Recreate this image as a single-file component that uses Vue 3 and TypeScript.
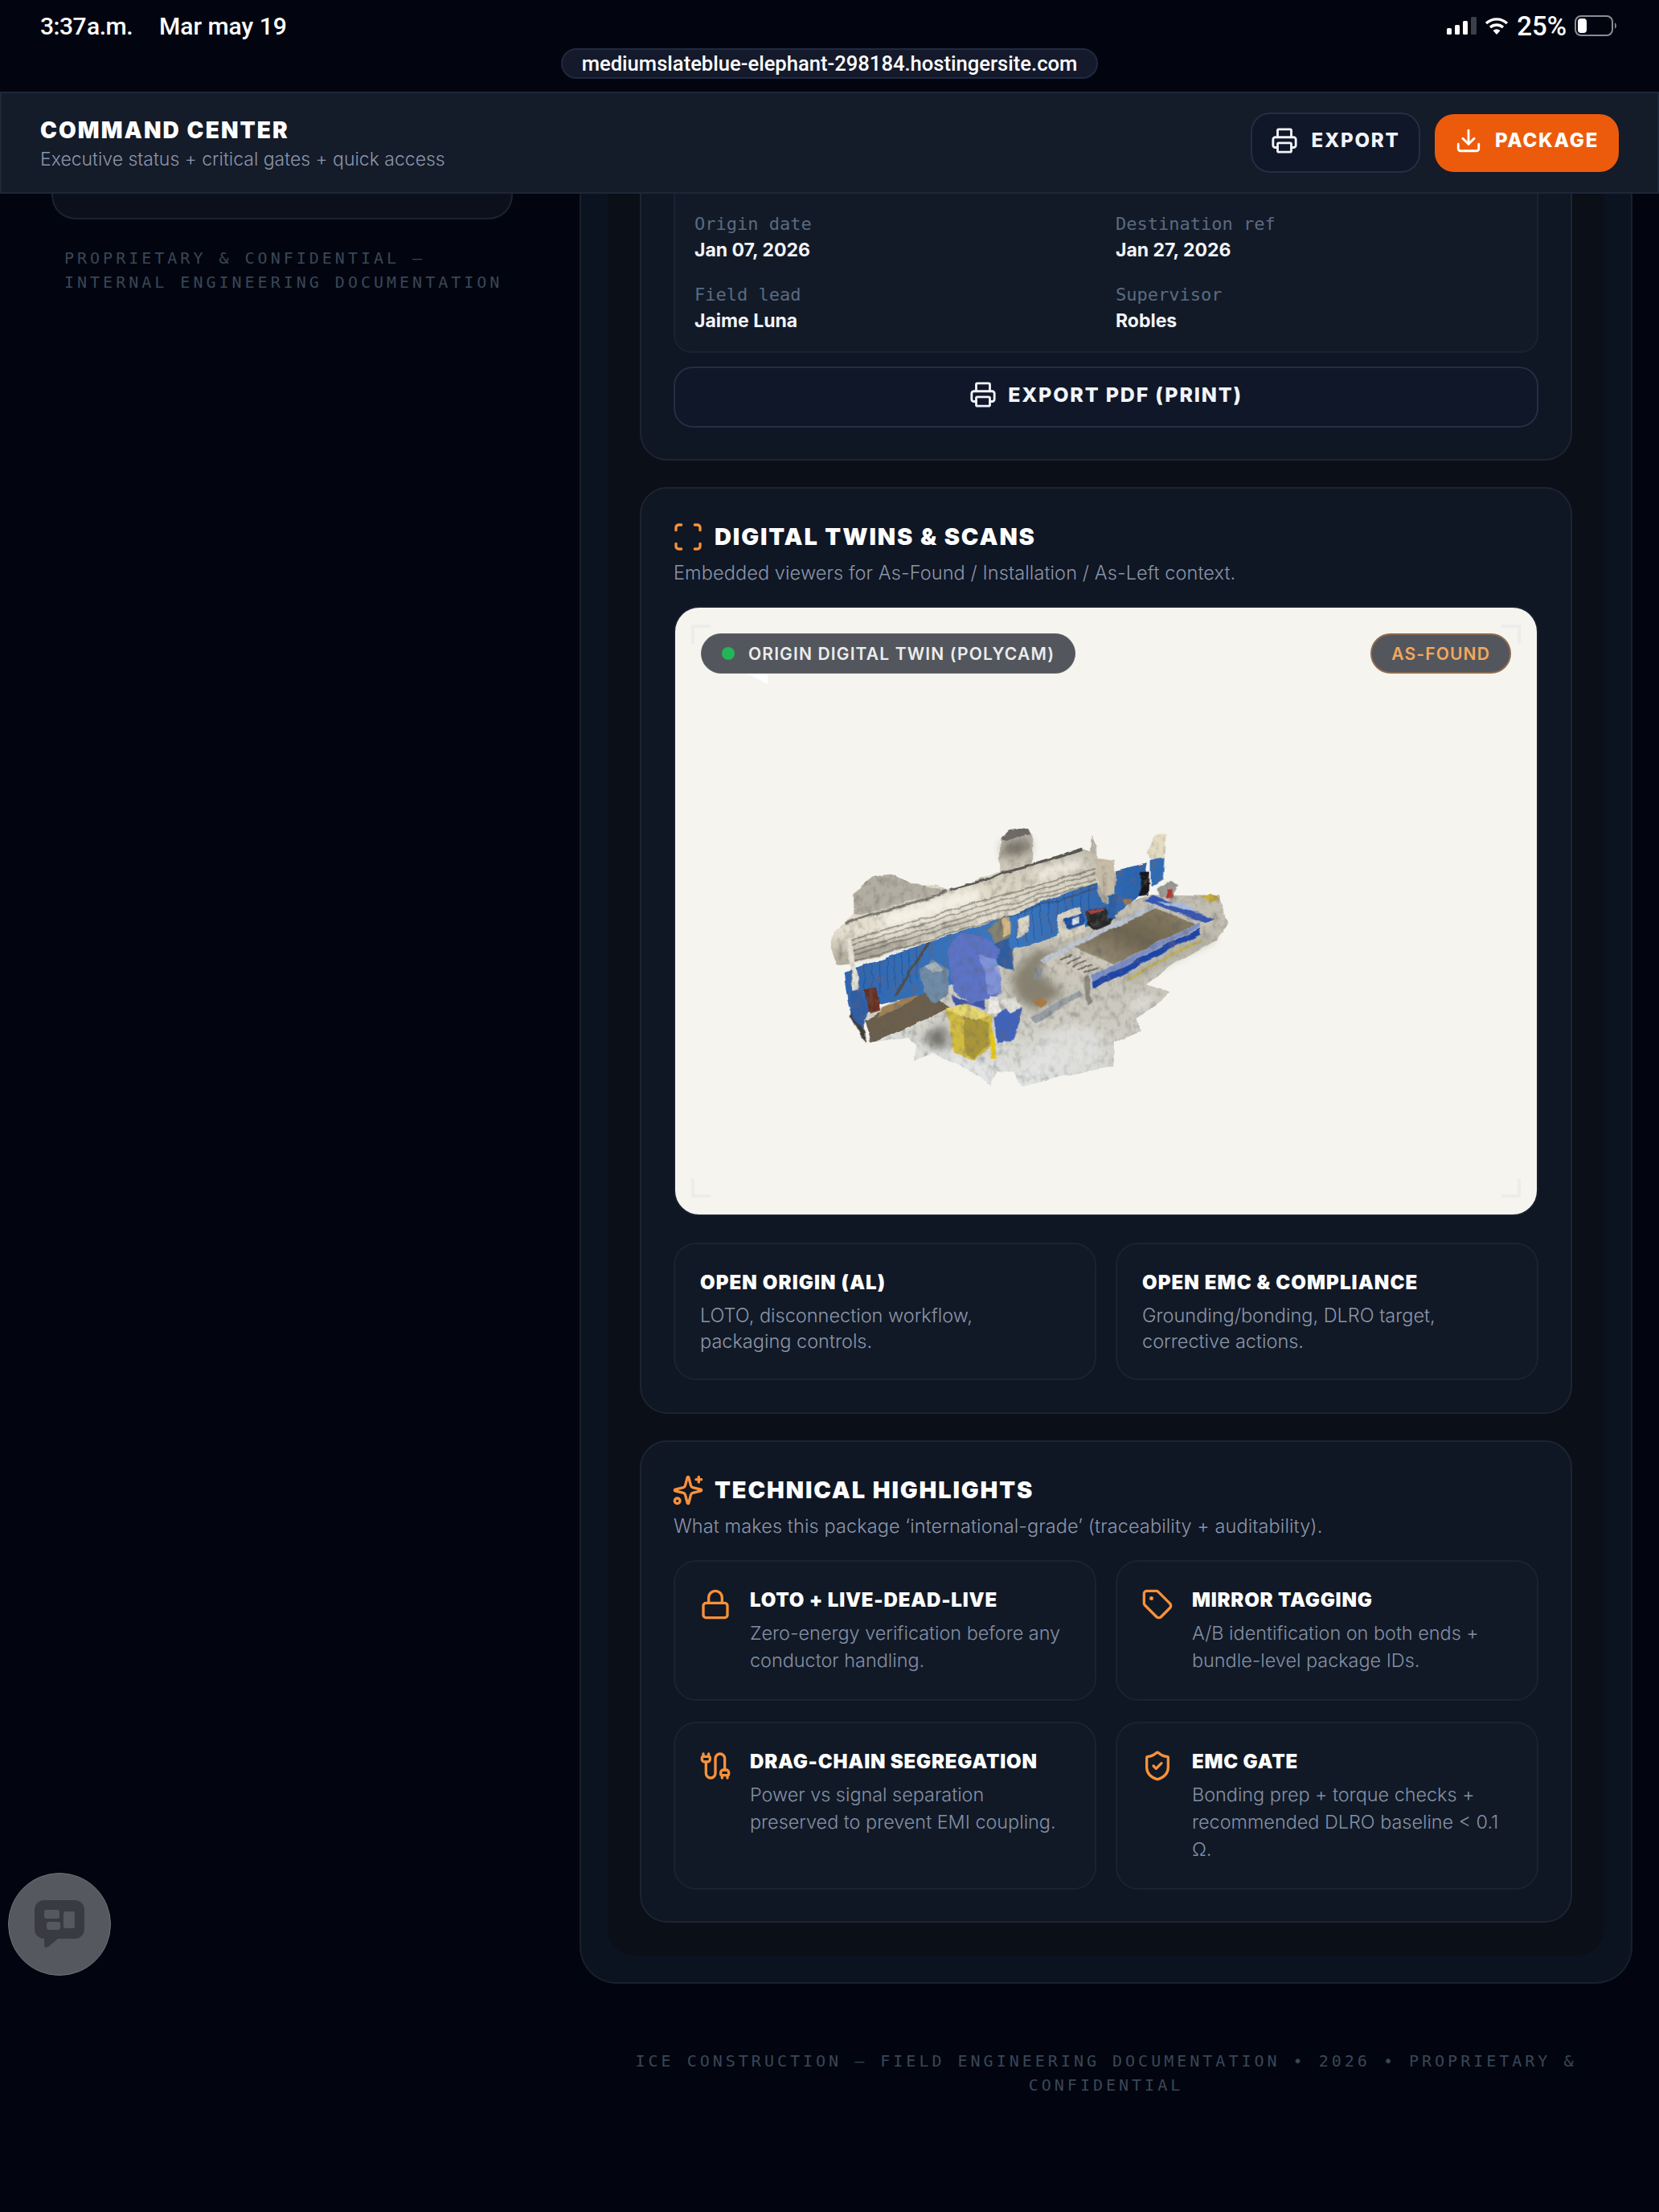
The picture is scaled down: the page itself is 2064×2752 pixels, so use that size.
<script setup lang="ts">
interface Field { label: string; value: string }
interface LinkCard { title: string; lines: string[] }
interface Highlight { icon: string; title: string; desc: string }

const fields: Field[] = [
  { label: 'Origin date', value: 'Jan 07, 2026' },
  { label: 'Destination ref', value: 'Jan 27, 2026' },
  { label: 'Field lead', value: 'Jaime Luna' },
  { label: 'Supervisor', value: 'Robles' },
];

const linkCards: LinkCard[] = [
  { title: 'OPEN ORIGIN (AL)', lines: ['LOTO, disconnection workflow,', 'packaging controls.'] },
  { title: 'OPEN EMC & COMPLIANCE', lines: ['Grounding/bonding, DLRO target,', 'corrective actions.'] },
];

const highlights: Highlight[] = [
  { icon: 'lock', title: 'LOTO + LIVE-DEAD-LIVE', desc: 'Zero-energy verification before any conductor handling.' },
  { icon: 'tag', title: 'MIRROR TAGGING', desc: 'A/B identification on both ends + bundle-level package IDs.' },
  { icon: 'cable', title: 'DRAG-CHAIN SEGREGATION', desc: 'Power vs signal separation preserved to prevent EMI coupling.' },
  { icon: 'shield', title: 'EMC GATE', desc: 'Bonding prep + torque checks + recommended DLRO baseline < 0.1 Ω.' },
];

// lineas de cables sobre la pared
const wires: number[] = [0, 20, 44, 62, 88];

// juntas verticales de la pared azul
const seams: string[] = [];
for (let x = 225; x < 440; x += 24) {
  const top = 688 - 0.42 * (x - 182);
  seams.push(`M${x} ${top} L${x + 6} ${top + 125}`);
}
for (let x = 745; x < 1000; x += 26) {
  const top = 510 - 0.44 * (x - 640);
  seams.push(`M${x} ${top} L${x + 4} ${top + 125}`);
}
</script>

<template>
  <div class="page">
    <!-- status bar + url -->
    <div class="topbar">
      <div class="status">
        <div class="status-left"><span class="clock">3:37 a.m.</span><span>Mar may 19</span></div>
        <div class="status-right">
          <svg width="38" height="22" viewBox="0 0 38 22">
            <rect x="0" y="14" width="6" height="8" rx="1.5" fill="#fff" />
            <rect x="10" y="10" width="6" height="12" rx="1.5" fill="#fff" />
            <rect x="20" y="5" width="6" height="17" rx="1.5" fill="#fff" />
            <rect x="30" y="0" width="7" height="22" rx="1.5" fill="#3a3f4a" />
          </svg>
          <svg width="30" height="24" viewBox="0 0 30 24" fill="none" stroke="#fff" stroke-width="3.4">
            <path d="M2 9 a19 19 0 0 1 26 0" />
            <path d="M7 14 a12 12 0 0 1 16 0" />
            <path d="M15 23 L10.5 18 a6.5 6.5 0 0 1 9 0 Z" fill="#fff" stroke="none" />
          </svg>
          <span class="pct">25%</span>
          <svg width="54" height="26" viewBox="0 0 54 26" fill="none">
            <rect x="1" y="1" width="46" height="24" rx="7" stroke="#8a8d94" stroke-width="2" />
            <rect x="4" y="4" width="11" height="18" rx="4" fill="#fff" />
            <path d="M50 9 a5 5 0 0 1 0 8 Z" fill="#8a8d94" />
          </svg>
        </div>
      </div>
      <div class="url-row"><div class="url">mediumslateblue-elephant-298184.hostingersite.com</div></div>
    </div>

    <header class="head">
      <div class="head-text">
        <h1>COMMAND CENTER</h1>
        <p>Executive status + critical gates + quick access</p>
      </div>
      <div class="head-actions">
        <button class="btn btn-ghost">
          <svg class="ic-btn" viewBox="0 0 24 24"><path d="M6 18H4a2 2 0 0 1-2-2v-5a2 2 0 0 1 2-2h16a2 2 0 0 1 2 2v5a2 2 0 0 1-2 2h-2" /><path d="M6 9V3a1 1 0 0 1 1-1h10a1 1 0 0 1 1 1v6" /><rect x="6" y="14" width="12" height="8" rx="1" /></svg>
          EXPORT
        </button>
        <button class="btn btn-orange">
          <svg class="ic-btn" viewBox="0 0 24 24"><path d="M21 15v4a2 2 0 0 1-2 2H5a2 2 0 0 1-2-2v-4" /><polyline points="7 10 12 15 17 10" /><line x1="12" y1="15" x2="12" y2="3" /></svg>
          PACKAGE
        </button>
      </div>
    </header>

    <main class="layout">
      <aside class="side">
        <div class="side-card"></div>
        <p class="side-note">PROPRIETARY &amp; CONFIDENTIAL —<br />INTERNAL ENGINEERING DOCUMENTATION</p>
      </aside>

      <div class="col">
        <section class="panel">
          <div class="panel-inner">
            <!-- tarjeta de datos -->
            <div class="card card-cut">
              <div class="data-box">
                <div v-for="f in fields" :key="f.label" class="field">
                  <span class="field-label">{{ f.label }}</span>
                  <span class="field-value">{{ f.value }}</span>
                </div>
              </div>
              <button class="btn-wide">
                <svg class="ic-btn" viewBox="0 0 24 24"><path d="M6 18H4a2 2 0 0 1-2-2v-5a2 2 0 0 1 2-2h16a2 2 0 0 1 2 2v5a2 2 0 0 1-2 2h-2" /><path d="M6 9V3a1 1 0 0 1 1-1h10a1 1 0 0 1 1 1v6" /><rect x="6" y="14" width="12" height="8" rx="1" /></svg>
                EXPORT PDF (PRINT)
              </button>
            </div>

            <!-- digital twins -->
            <div class="card">
              <div class="card-title">
                <svg class="ic-title" viewBox="0 0 24 24"><path d="M3 7V5a2 2 0 0 1 2-2h2" /><path d="M17 3h2a2 2 0 0 1 2 2v2" /><path d="M21 17v2a2 2 0 0 1-2 2h-2" /><path d="M7 21H5a2 2 0 0 1-2-2v-2" /></svg>
                <h2>DIGITAL TWINS &amp; SCANS</h2>
              </div>
              <p class="card-sub">Embedded viewers for As-Found / Installation / As-Left context.</p>

              <div class="viewer">
                <i class="mark tl"></i><i class="mark tr"></i><i class="mark bl"></i><i class="mark br"></i>
                <div class="tag-row">
                  <span class="pill"><i class="dot"></i>ORIGIN DIGITAL TWIN (POLYCAM)</span>
                  <span class="pill pill-found">AS-FOUND</span>
                </div>
                <i class="notch"></i>

                <!-- modelo 3D aproximado -->
                <svg class="scan" viewBox="0 0 1568 1260" preserveAspectRatio="none">
                  <defs>
                    <filter id="soft" x="-5%" y="-5%" width="110%" height="110%">
                      <feTurbulence type="fractalNoise" baseFrequency="0.014 0.018" numOctaves="3" seed="7" result="n" />
                      <feDisplacementMap in="SourceGraphic" in2="n" scale="18" xChannelSelector="R" yChannelSelector="G" />
                      <feGaussianBlur stdDeviation="2" result="b" />
                      <feTurbulence type="fractalNoise" baseFrequency="0.05 0.03" numOctaves="4" seed="3" result="t" />
                      <feColorMatrix in="t" type="matrix" values="0 0 0 0 .12  0 0 0 0 .12  0 0 0 0 .12  .8 .8 0 0 -.74" result="spot" />
                      <feComposite in="spot" in2="b" operator="in" result="tex" />
                      <feMerge><feMergeNode in="b" /><feMergeNode in="tex" /></feMerge>
                    </filter>
                    <filter id="wash" x="-20%" y="-20%" width="140%" height="140%">
                      <feGaussianBlur stdDeviation="16" />
                    </filter>
                    <linearGradient id="wall" x1="0.55" y1="0" x2="0.45" y2="1">
                      <stop offset="0" stop-color="#b5afa2" />
                      <stop offset="0.42" stop-color="#dcd6c5" />
                      <stop offset="0.8" stop-color="#e6e1d2" />
                      <stop offset="1" stop-color="#b8b2a2" />
                    </linearGradient>
                    <linearGradient id="floor" x1="0.6" y1="0.2" x2="0.35" y2="1">
                      <stop offset="0" stop-color="#c2beb2" />
                      <stop offset="0.55" stop-color="#cfcdc3" />
                      <stop offset="1" stop-color="#e3e6e6" />
                    </linearGradient>
                    <linearGradient id="bed" x1="0" y1="1" x2="1" y2="0">
                      <stop offset="0" stop-color="#a59a82" />
                      <stop offset="0.5" stop-color="#6f6550" />
                      <stop offset="1" stop-color="#8f8468" />
                    </linearGradient>
                    <linearGradient id="bluewall" x1="0" y1="0" x2="1" y2="0">
                      <stop offset="0" stop-color="#2d66b0" />
                      <stop offset="0.5" stop-color="#3a79c4" />
                      <stop offset="1" stop-color="#2a63ad" />
                    </linearGradient>
                  </defs>

                  <!-- piso -->
                  <g filter="url(#soft)">
                    <path fill="url(#floor)" d="M250 850 L780 560 L1180 400 L1400 405 L1435 510 L1390 570 L1250 660 L1165 735 L1245 765 L1180 830 L1130 860 L1150 905 L1060 950 L1060 1040 L900 1075 L820 1100 L760 1115 L735 1060 L680 1060 L660 1110 L600 1060 L470 990 L410 1020 L420 960 L395 930 L270 955 Z" />
                  </g>
                  <g filter="url(#wash)">
                    <path fill="#e8eaea" opacity=".55" d="M760 1040 L840 920 L930 880 L1020 910 L1020 1020 L880 1050 L790 1085 Z" />
                    <path fill="#eef0ef" opacity=".6" d="M1120 780 L1210 780 L1150 825 L1110 840Z" />
                    <path fill="#eef0f1" opacity=".7" d="M500 1000 L560 1000 L650 1050 L650 1085 L590 1040Z" />
                    <path fill="#6f6e68" d="M440 930 L510 880 L520 975 L475 970Z" />
                    <path fill="#85806f" d="M730 700 L800 610 L900 610 L810 680 L900 770 L800 830 L740 780Z" />
                    <path fill="#a8a698" d="M1100 700 L1300 590 L1380 540 L1380 570 L1200 670 L1110 730Z" />
                  </g>
                  <g filter="url(#soft)">
                    <path fill="#c9b23a" d="M1345 410 L1375 395 L1405 420 L1370 428Z" />
                    <!-- suelo cafe izquierda -->
                    <path fill="#6c5f4c" d="M250 870 L440 755 L530 820 L270 955 Z" />
                    <path fill="#9f8257" d="M310 820 L440 760 L400 800 L290 860Z" />
                    <!-- pared azul -->
                    <path fill="url(#bluewall)" d="M182 690 L440 580 L640 510 L1000 350 L1060 450 L1068 310 L1170 280 L1150 400 L1050 490 L780 590 L735 600 L700 660 L440 770 L300 810 L250 850 L215 880 L195 800Z" />
                    <g stroke="#1d4c90" stroke-width="3" opacity=".6">
                      <path v-for="s in seams" :key="s" :d="s" />
                    </g>
                    <path fill="#4f4d49" d="M465 555 L345 775 L352 780 L472 560Z" />
                    <!-- pared blanca superior -->
                    <path fill="url(#wall)" d="M135 580 L160 525 L215 470 L215 395 L280 330 L330 320 L400 355 L480 365 L530 380 L690 310 L690 190 L720 160 L780 150 L795 180 L795 280 L960 225 L985 235 L990 180 L1010 240 L1005 350 L640 510 L440 580 L210 655 L160 660Z" />
                    <path fill="#b3aea2" d="M215 470 L215 395 L280 330 L330 320 L400 355 L520 385 L380 430 L240 475Z" />
                  </g>
                  <g filter="url(#wash)" opacity=".8">
                    <path fill="#fbf8ee" d="M300 470 L620 370 L640 420 L320 530Z" />
                    <path fill="#fbf8ee" d="M800 310 L960 260 L960 300 L810 350Z" />
                    <path fill="#77736a" d="M215 620 L600 490 L600 500 L220 640Z" />
                    <path fill="#625f58" d="M700 210 L780 190 L785 240 L705 260Z" />
                  </g>
                  <g filter="url(#soft)">
                    <path fill="none" stroke="#2b2a28" stroke-width="9" opacity=".7" d="M530 380 L640 345 L700 315 L800 285 L960 228" />
                    <path fill="none" stroke="#2f2e2b" stroke-width="8" opacity=".6" d="M185 505 L280 470 L400 432 L520 385" />
                    <path fill="#6e6b66" d="M692 190 L720 160 L780 150 L790 175 L760 180 L700 200Z" />
                    <g fill="none" stroke="#3a3834" stroke-width="3.5" opacity=".55">
                      <path v-for="w in wires" :key="w" :d="`M210 ${570 + w * 0.9} L620 ${425 + w} L1000 ${305 + w * 0.8}`" />
                    </g>
                    <!-- ducto derecho -->
                    <path fill="#2f6cb6" d="M1180 270 L1225 255 L1220 340 L1180 370Z" />
                    <path fill="#e4dcc2" d="M1170 240 L1200 175 L1232 170 L1226 260 L1180 265Z" />
                    <path fill="#17181c" d="M1148 312 L1175 310 L1172 400 L1145 405Z" />
                    <path fill="#9b9a95" d="M1200 375 L1240 345 L1270 360 L1250 405 L1215 410Z" />
                    <path fill="#b5342e" d="M1232 378 L1250 375 L1250 408 L1233 410Z" />
                    <!-- panel y caja negra -->
                    <path fill="#d8d3c2" d="M880 470 L950 445 L968 530 L892 575 L872 560Z" />
                    <path fill="#1f4fa0" d="M898 495 L960 468 L962 510 L905 532Z" />
                    <path fill="#d9e3ef" d="M925 490 L945 480 L945 505 L925 515Z" />
                    <path fill="#272626" d="M968 462 L1030 445 L1065 480 L1050 512 L1000 532 L972 510Z" />
                    <path fill="#b5423a" d="M975 462 L1025 448 L1030 455 L985 470Z" />
                    <path fill="#bdb29a" d="M1005 260 L1060 270 L1068 340 L1060 440 L1020 430 L1005 380Z" opacity=".85" />
                    <path fill="#2a5ea6" d="M1040 400 L1068 395 L1066 490 L1045 490Z" />
                    <path fill="#a77c4d" d="M1090 420 L1120 415 L1120 435 L1095 440Z" />
                    <!-- mesa -->
                    <path fill="url(#bed)" d="M930 595 L1190 450 L1325 510 L1060 660 Z" />
                    <path fill="#cdc8bb" d="M830 650 L930 598 L1040 655 L940 732Z" />
                    <g stroke="#4f4d49" stroke-width="6" opacity=".75">
                      <path d="M885 640 L925 620" /><path d="M905 655 L950 630" /><path d="M925 670 L970 645" /><path d="M945 685 L990 660" />
                      <path d="M965 695 L1010 672" />
                    </g>
                    <path fill="#bcc4d2" d="M820 640 L1190 430 L1200 442 L832 652Z" />
                    <path fill="#3457b4" d="M1160 420 L1190 400 L1390 490 L1365 510Z" />
                    <path fill="#a8bcdd" d="M1200 425 L1290 430 L1340 470 L1260 445Z" />
                    <path fill="#c7c2b2" d="M1335 515 L1390 490 L1380 520 L1345 538Z" />
                    <path fill="#7d8fc8" d="M985 705 L1335 505 L1340 520 L990 725Z" />
                    <path fill="#1f45a8" d="M990 725 L1340 525 L1342 548 L992 750Z" />
                    <path fill="#c9b43f" d="M1095 716 L1340 565 L1345 570 L1100 720Z" />
                    <path fill="#9aa0a6" d="M790 855 L950 755 L965 770 L805 880Z" />
                    <path fill="#8d8a80" d="M965 710 L980 700 L985 800 L970 815Z" />
                    <path fill="#8c8f96" d="M800 670 L825 665 L830 710 L805 715Z" />
                    <path fill="#a97c45" d="M798 795 L825 780 L842 805 L820 822Z" />
                    <!-- tanque gris y barril -->
                    <path fill="#6f8ba6" d="M430 680 L470 640 L525 680 L522 770 L480 805 L440 765Z" />
                    <path fill="#a9b3bb" d="M445 665 L475 650 L510 680 L470 690Z" />
                    <path fill="#6a2d1e" d="M252 752 L290 742 L303 830 L268 842Z" />
                    <path fill="#e6e2d6" d="M195 590 L205 555 L235 750 L212 755 L205 690Z" />
                    <path fill="#85826f" d="M650 530 L700 480 L725 510 L720 570 L680 590Z" />
                    <path fill="#d3b888" d="M695 490 L720 478 L722 545 L700 560Z" />
                    <path fill="#2d5da0" d="M660 590 L720 560 L735 680 L690 670Z" />
                    <path fill="#ddd8c8" d="M745 490 L785 475 L785 540 L750 560Z" />
                    <!-- maquina azul -->
                    <path fill="#5b73c6" d="M517 600 L560 545 L640 558 L695 600 L680 640 L650 652 L695 712 L690 768 L640 790 L600 812 L540 760Z" />
                    <path fill="#8a9bdd" d="M620 620 L680 640 L695 712 L690 768 L650 770 L640 690Z" opacity=".8" />
                    <path fill="#3d56a8" d="M535 770 L600 810 L640 790 L640 830 L590 810 L545 810Z" />
                    <path fill="#efeee8" d="M655 775 L685 780 L695 840 L650 845Z" />
                    <!-- base azul -->
                    <path fill="#3f63bb" d="M670 860 L735 800 L765 825 L735 940 L680 955Z" />
                    <path fill="#e0dfd8" d="M690 790 L740 780 L765 820 L720 840Z" />
                    <!-- gabinete amarillo -->
                    <path fill="#d2bc41" d="M515 825 L570 808 L665 852 L660 960 L610 1022 L540 985 Z" />
                    <path fill="#a99637" d="M570 850 L655 880 L650 960 L608 1015 L575 990Z" />
                    <path fill="#e8d96f" d="M515 825 L570 808 L665 852 L612 870Z" />
                    <path fill="#e5c80e" d="M654 905 L668 905 L675 1010 L660 1012Z" />
                    <!-- sombras -->
                    <path fill="#3e3a33" d="M200 850 L215 825 L262 955 L240 930Z" />
                    <path fill="#2d5da5" d="M205 760 L240 755 L262 830 L240 900 L210 860Z" />
                  </g>
                </svg>
              </div>

              <div class="two-col link-row">
                <div v-for="c in linkCards" :key="c.title" class="tile link">
                  <h3>{{ c.title }}</h3>
                  <p v-for="l in c.lines" :key="l">{{ l }}</p>
                </div>
              </div>
            </div>

            <!-- highlights -->
            <div class="card card-last">
              <div class="card-title">
                <svg class="ic-title" viewBox="0 0 24 24"><path d="M9.937 15.5A2 2 0 0 0 8.5 14.063l-6.135-1.582a.5.5 0 0 1 0-.962L8.5 9.936A2 2 0 0 0 9.937 8.5l1.582-6.135a.5.5 0 0 1 .963 0L14.063 8.5A2 2 0 0 0 15.5 9.937l6.135 1.581a.5.5 0 0 1 0 .964L15.5 14.063a2 2 0 0 0-1.437 1.437l-1.582 6.135a.5.5 0 0 1-.963 0z" /><path d="M20 2v4" /><path d="M22 4h-4" /><circle cx="4" cy="20" r="2" /></svg>
                <h2>TECHNICAL HIGHLIGHTS</h2>
              </div>
              <p class="card-sub">What makes this package ‘international-grade’ (traceability + auditability).</p>

              <div class="two-col high-grid">
                <div v-for="h in highlights" :key="h.title" class="tile high">
                  <svg class="ic-high" viewBox="0 0 24 24">
                    <template v-if="h.icon === 'lock'">
                      <rect x="3" y="11" width="18" height="11" rx="2" ry="2" /><path d="M7 11V7a5 5 0 0 1 10 0v4" />
                    </template>
                    <template v-else-if="h.icon === 'tag'">
                      <path d="M12.586 2.586A2 2 0 0 0 11.172 2H4a2 2 0 0 0-2 2v7.172a2 2 0 0 0 .586 1.414l8.704 8.704a2.426 2.426 0 0 0 3.42 0l6.58-6.58a2.426 2.426 0 0 0 0-3.42z" /><circle cx="7.5" cy="7.5" r=".5" fill="currentColor" />
                    </template>
                    <template v-else-if="h.icon === 'cable'">
                      <path d="M17 21v-2a1 1 0 0 1-1-1v-1a2 2 0 0 1 2-2h2a2 2 0 0 1 2 2v1a1 1 0 0 1-1 1" /><path d="M19 15V6.5a1 1 0 0 0-7 0v11a1 1 0 0 1-7 0V9" /><path d="M21 21v-2h-4" /><path d="M3 5h4V3" /><path d="M7 5a1 1 0 0 1 1 1v1a2 2 0 0 1-2 2H4a2 2 0 0 1-2-2V6a1 1 0 0 1 1-1V3" />
                    </template>
                    <template v-else>
                      <path d="M20 13c0 5-3.5 7.5-7.66 8.95a1 1 0 0 1-.67-.01C7.5 20.5 4 18 4 13V6a1 1 0 0 1 1-1c2 0 4.5-1.2 6.24-2.72a1.17 1.17 0 0 1 1.52 0C14.51 3.81 17 5 19 5a1 1 0 0 1 1 1z" /><path d="m9 12 2 2 4-4" />
                    </template>
                  </svg>
                  <div>
                    <h3>{{ h.title }}</h3>
                    <p>{{ h.desc }}</p>
                  </div>
                </div>
              </div>
            </div>
          </div>
        </section>

        <footer class="foot">ICE CONSTRUCTION — FIELD ENGINEERING DOCUMENTATION • 2026 • PROPRIETARY &amp; CONFIDENTIAL</footer>
      </div>
    </main>

    <!-- boton flotante de chat -->
    <div class="chat">
      <svg width="66" height="60" viewBox="0 0 66 60">
        <path fill="#3a3b40" d="M14 1h38a12 12 0 0 1 12 12v24a12 12 0 0 1-12 12H31L19 59c-2 1.500-5 1-5-2v-8A12 12 0 0 1 2 37V13A12 12 0 0 1 14 1z" />
        <rect x="14" y="13" width="19" height="11" rx="3" fill="#55585f" />
        <rect x="17" y="28" width="17" height="10" rx="3" fill="#55585f" />
        <rect x="38" y="15" width="14" height="21" rx="2.500" fill="#55585f" />
      </svg>
    </div>
  </div>
</template>

<style scoped>
.page {
  position: relative;
  min-height: 2752px;
  background: #02050f;
  font-family: Inter, "Liberation Sans", sans-serif;
  color: #fff;
  overflow: hidden;
}
h1, h2, h3, p { margin: 0; }

/* top */
.topbar { height: 114px; box-sizing: border-box; }
.status {
  height: 60px;
  display: flex;
  align-items: center;
  justify-content: space-between;
  padding: 4px 50px 0;
  box-sizing: border-box;
  font-family: Roboto, Inter, sans-serif;
  font-size: 30px;
  font-weight: 500;
}
.status-left { display: flex; gap: 33px; }
.clock { word-spacing: -6px; letter-spacing: -.5px; }
.status-right { display: flex; align-items: center; gap: 9px; margin-right: 1px; }
.pct { margin: 0 1px; font-size: 33px; }
.url-row { display: flex; justify-content: center; }
.url {
  height: 38px;
  width: 668px;
  box-sizing: border-box;
  border: 2px solid #1f2940;
  border-radius: 19px;
  background: #141a2b;
  font-family: Roboto, Inter, sans-serif;
  font-size: 25.6px;
  font-weight: 500;
  line-height: 34px;
  text-align: center;
  white-space: nowrap;
}

/* header */
.head {
  height: 127px;
  box-sizing: border-box;
  position: relative;
  z-index: 2;
  display: flex;
  align-items: center;
  justify-content: space-between;
  padding: 0 48px;
  background: #141b29;
  border: 2px solid #1d2738;
}
.head-text { padding-top: 3px; }
.head h1 {
  font-size: 28px;
  line-height: 34px;
  font-weight: 900;
  letter-spacing: 2.1px;
}
.head p {
  margin-top: 4px;
  font-size: 23px;
  line-height: 30px;
  font-weight: 300;
  color: #8b95a8;
}
.head-actions { display: flex; align-items: center; gap: 18px; }
.btn {
  display: flex;
  align-items: center;
  justify-content: center;
  gap: 16px;
  padding: 0 0 6px;
  border-radius: 24px;
  font-family: inherit;
  font-size: 24px;
  font-weight: 800;
  letter-spacing: 1.8px;
  color: #f1f4f9;
  cursor: pointer;
}
.btn-ghost { width: 211px; height: 75px; background: #0f1728; border: 2px solid #232f42; }
.btn-orange { width: 229px; height: 72px; background: #ec5b0b; border: 0; color: #fff; }
.ic-btn {
  width: 34px;
  height: 34px;
  fill: none;
  stroke: currentColor;
  stroke-width: 2;
  stroke-linecap: round;
  stroke-linejoin: round;
}

/* layout */
.layout {
  display: grid;
  grid-template-columns: 574px 1310px;
  gap: 83px;
  padding-left: 64px;
}
.side-card {
  height: 32px;
  box-sizing: border-box;
  background: #0b101c;
  border: 2px solid #1b2330;
  border-top: 0;
  border-radius: 0 0 30px 30px;
}
.side-note {
  margin: 33px 0 0 16px;
  font-family: "DejaVu Sans Mono", "Liberation Mono", monospace;
  font-size: 20px;
  line-height: 30px;
  letter-spacing: 4px;
  color: #3a4657;
  white-space: nowrap;
}

.panel {
  background: #0c1320;
  border: 2px solid #181f2d;
  border-top: 0;
  border-radius: 0 0 46px 46px;
  padding: 0 33px 33px;
}
.panel-inner {
  background: #0b0f18;
  border-radius: 0 0 34px 34px;
  padding: 0 40px 41px;
  display: flex;
  flex-direction: column;
  gap: 33px;
}
.card {
  background: #0f1624;
  border: 2px solid #1e2431;
  border-radius: 34px;
  padding: 40px;
}
.card-cut {
  border-top: 0;
  border-radius: 0 0 34px 34px;
  padding: 0 40px 39px;
}
.card-last { padding-bottom: 39px; }

.data-box {
  display: grid;
  grid-template-columns: 1fr 1fr;
  gap: 27px 24px;
  padding: 25px 24px 22px;
  background: #121a27;
  border: 2px solid #1a2333;
  border-top: 0;
  border-radius: 0 0 22px 22px;
  box-sizing: border-box;
}
.field { display: flex; flex-direction: column; gap: 3px; }
.field-label {
  font-family: "DejaVu Sans Mono", "Liberation Mono", monospace;
  font-size: 22px;
  line-height: 26px;
  color: #5a6a80;
}
.field-value {
  font-size: 23px;
  line-height: 32px;
  font-weight: 700;
  color: #f2f4f8;
}
.btn-wide {
  width: 100%;
  height: 76px;
  margin-top: 17px;
  padding: 0 0 6px;
  display: flex;
  align-items: center;
  justify-content: center;
  gap: 14px;
  background: #0f1728;
  border: 2px solid #232f42;
  border-radius: 24px;
  font-family: inherit;
  font-size: 25px;
  font-weight: 800;
  letter-spacing: 1.8px;
  color: #f1f4f9;
}

.card-title { display: flex; align-items: center; gap: 13px; height: 40px; margin-left: -2px; }
.card-title h2 {
  font-size: 29px;
  line-height: 40px;
  font-weight: 900;
  letter-spacing: 1.9px;
}
.ic-title {
  width: 40px;
  height: 40px;
  fill: none;
  stroke: #f8913a;
  stroke-width: 2;
  stroke-linecap: round;
  stroke-linejoin: round;
}
.card-sub {
  margin-top: 10px;
  font-size: 23.5px;
  line-height: 30px;
  font-weight: 300;
  letter-spacing: .1px;
  color: #8b95a8;
}

/* viewer */
.viewer {
  position: relative;
  box-sizing: border-box;
  height: 759px;
  margin-top: 26px;
  background: #f5f4ef;
  border: 2px solid #18202e;
  border-radius: 32px;
  overflow: hidden;
}
.tag-row {
  position: absolute;
  top: 32px;
  left: 32px;
  right: 32px;
  display: flex;
  justify-content: space-between;
}
.pill {
  display: flex;
  align-items: center;
  height: 50px;
  padding: 0 25px 0 25px;
  box-sizing: border-box;
  background: #53565d;
  border: 1px solid #62656c;
  border-radius: 25px;
  font-size: 21px;
  font-weight: 600;
  letter-spacing: 1.15px;
  color: #ececec;
  white-space: nowrap;
}
.pill-found { color: #f5a85a; border: 2px solid #8e6a4e; padding: 0 24px; }
.dot { width: 16px; height: 16px; border-radius: 50%; background: #22b658; margin-right: 17px; }
.notch {
  position: absolute;
  left: 90px;
  top: 82px;
  width: 0;
  height: 0;
  border-right: 25px solid #fff;
  border-bottom: 13px solid transparent;
}
.mark { position: absolute; width: 20px; height: 20px; border: 0 solid #ecedea; }
.tl { left: 20px; top: 21px; border-width: 4px 0 0 4px; }
.tr { right: 20px; top: 21px; border-width: 4px 4px 0 0; }
.bl { left: 20px; bottom: 21px; border-width: 0 0 4px 4px; }
.br { right: 20px; bottom: 21px; border-width: 0 4px 4px 0; }
.scan { position: absolute; left: 140px; top: 224px; width: 600px; height: 420px; }

/* tiles */
.two-col { display: grid; grid-template-columns: 1fr 1fr; gap: 24px; }
.link-row { margin-top: 33px; }
.high-grid { margin-top: 27px; row-gap: 26px; }
.tile {
  box-sizing: border-box;
  background: #111926;
  border: 2px solid #1a2333;
  border-radius: 28px;
}
.tile h3 {
  font-size: 24px;
  line-height: 34px;
  font-weight: 900;
  letter-spacing: .8px;
  color: #fff;
}
.link { padding: 31px 31px 30px; }
.link h3 { margin-bottom: 8px; letter-spacing: 1.1px; }
.link p {
  font-size: 23.5px;
  line-height: 32px;
  font-weight: 300;
  color: #8b95a8;
}
.high { display: flex; gap: 23px; padding: 31px 30px; }
.high h3 { margin-bottom: 7px; }
.high p {
  font-size: 23.4px;
  line-height: 34px;
  font-weight: 300;
  color: #8490a5;
}
.ic-high {
  flex: none;
  width: 40px;
  height: 40px;
  margin-top: 2px;
  fill: none;
  stroke: #f8913a;
  stroke-width: 2;
  stroke-linecap: round;
  stroke-linejoin: round;
}

.foot {
  margin-top: 81px;
  font-family: "DejaVu Sans Mono", "Liberation Mono", monospace;
  font-size: 20px;
  line-height: 30px;
  letter-spacing: 4px;
  color: #3a4657;
  text-align: center;
}

.chat {
  position: absolute;
  left: 10px;
  top: 2330px;
  width: 128px;
  height: 128px;
  box-sizing: border-box;
  display: flex;
  align-items: center;
  justify-content: center;
  padding-bottom: 2px;
  background: #55585f;
  border: 1px solid #6d7077;
  border-radius: 50%;
}
</style>

<style>
html, body { background: #02050f; }
</style>
